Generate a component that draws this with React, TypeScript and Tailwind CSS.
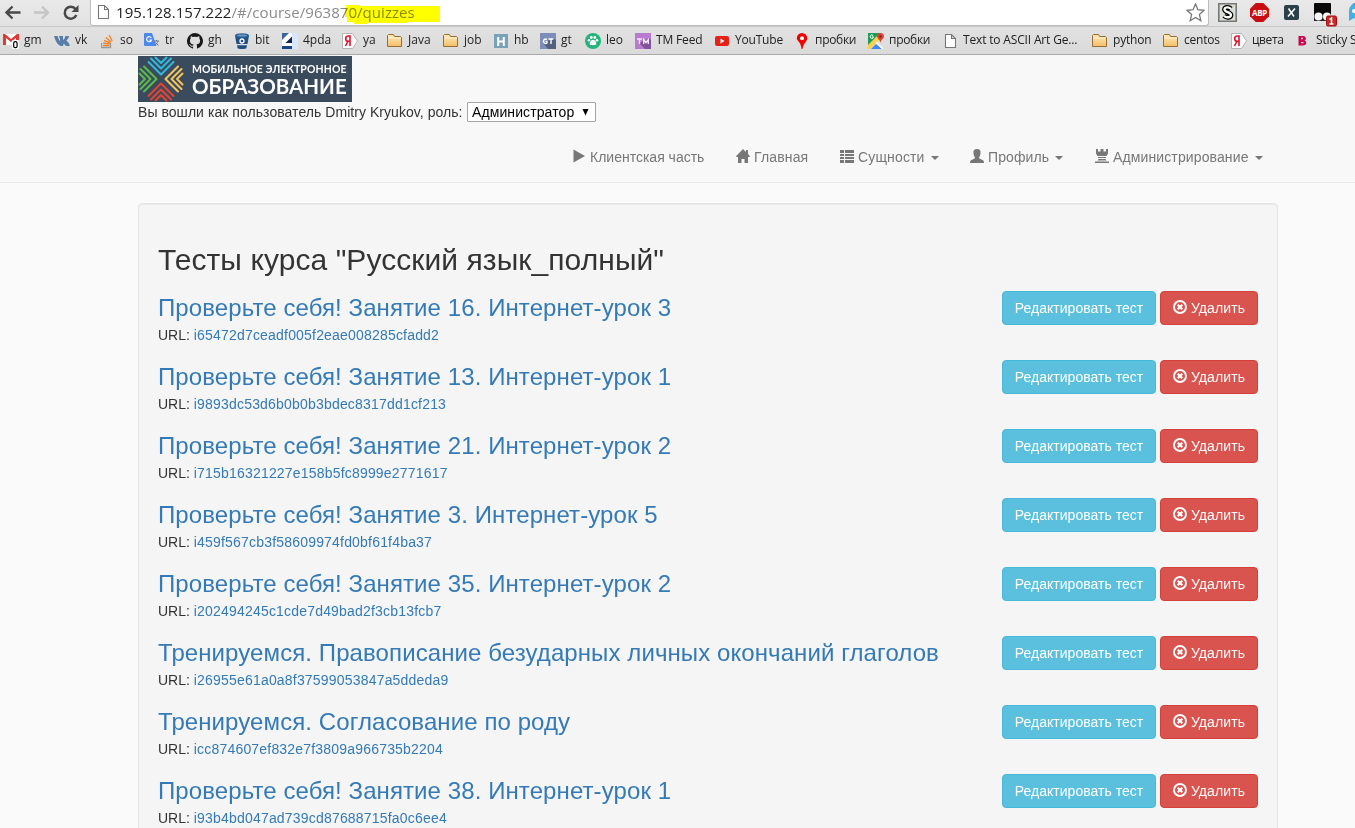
import { ReactNode } from 'react';

const quizzes = [
  ['Проверьте себя! Занятие 16. Интернет-урок 3', 'i65472d7ceadf005f2eae008285cfadd2'],
  ['Проверьте себя! Занятие 13. Интернет-урок 1', 'i9893dc53d6b0b0b3bdec8317dd1cf213'],
  ['Проверьте себя! Занятие 21. Интернет-урок 2', 'i715b16321227e158b5fc8999e2771617'],
  ['Проверьте себя! Занятие 3. Интернет-урок 5', 'i459f567cb3f58609974fd0bf61f4ba37'],
  ['Проверьте себя! Занятие 35. Интернет-урок 2', 'i202494245c1cde7d49bad2f3cb13fcb7'],
  ['Тренируемся. Правописание безударных личных окончаний глаголов', 'i26955e61a0a8f37599053847a5ddeda9'],
  ['Тренируемся. Согласование по роду', 'icc874607ef832e7f3809a966735b2204'],
  ['Проверьте себя! Занятие 38. Интернет-урок 1', 'i93b4bd047ad739cd87688715fa0c6ee4'],
];

const Icon = ({ children, className = 'size-4' }: { children: ReactNode; className?: string }) => (
  <svg viewBox="0 0 16 16" className={`shrink-0 ${className}`}>{children}</svg>
);

const Folder = () => (
  <Icon>
    <defs>
      <linearGradient id="folder" x1="0" y1="0" x2="0" y2="1">
        <stop offset="0" stopColor="#ffe9b8" /><stop offset="1" stopColor="#f3bf6b" />
      </linearGradient>
    </defs>
    <path d="M.5 13.500h14V4.500L13.500 3.500H7.500L6.500 1.500H1.500L.5 2.500z" fill="url(#folder)" stroke="#9a6b33" />
    <path d="M1.500 5h12" stroke="#fff3d6" />
  </Icon>
);

const Yandex = () => (
  <Icon>
    <path d="M.5.5h10l5 7.500-5 7.500H.5z" fill="#fff" stroke="#b5b5b5" />
    <path d="M8 13V3H6.300C4.500 3 3.700 4.100 3.700 5.700S4.600 8.300 6.200 8.300H8M5.800 8.500L3.500 13" fill="none" stroke="#e3122b" strokeWidth="1.600" />
  </Icon>
);

const Page = () => (
  <Icon>
    <path d="M3.500 1.500h6l4 4v9h-10z M9.500 1.500v4h4" fill="#fff" stroke="#777" strokeWidth="1.100" />
  </Icon>
);

const icons: Record<string, ReactNode> = {
  gmail: (
    <Icon className="size-4 overflow-visible">
      <path d="M0 1h16v11H0z" fill="#fff" />
      <path d="M0 12V1h2l6 5 6-5h2v11h-3V5L8 9 3 5v7z" fill="#dc3a35" />
      <rect x="9" y="7" width="7" height="9" rx="1" fill="#fff" />
      <rect x="10.700" y="8.700" width="3.400" height="6" rx="1.500" fill="none" stroke="#000" strokeWidth="1.200" />
    </Icon>
  ),
  vk: <Icon><path d="M0 3h3.500l2 5C6.600 7.500 6 5 5 4V3h4v4c1-.5 2-2.500 2.500-4H15c-.2 2-1.500 3.300-2.600 4.800C14 9 15.500 10.400 15.800 13H12l-2.300-2.600L9 13H7C3.300 12 1.500 8 0 3z" fill="#587ea8" /></Icon>,
  so: (
    <Icon className="ml-[2px] size-4">
      <path d="M.5 10v4.500h9V10" fill="none" stroke="#999" strokeWidth="1.300" />
      <path d="M2 12.500h6.500M2.200 10l6.500 .9M3 7.300l6.200 2.500M5 4.400l5 4.600M8.200 2l3 6" stroke="#f48024" strokeWidth="1.300" />
    </Icon>
  ),
  tr: (
    <Icon>
      <path d="M7 4h8.500v12H10z" fill="#ddd" />
      <path d="M1 0h7l4.500 13H1q-1 0-1-1V1q0-1 1-1z" fill="#4a88ee" />
      <path d="M7.300 5A2.500 2.500 0 1 0 7.500 7H5.300" fill="none" stroke="#fff" strokeWidth="1.200" />
      <path d="M10 8h5M12.500 7v1M14 8c-.3 2-2 3.500-3 4M11.500 9.500l3 3" fill="none" stroke="#777" />
    </Icon>
  ),
  gh: <Icon><path fill="#191717" d="M8 0a8 8 0 0 0-2.530 15.590c.4.070.55-.17.55-.38v-1.490c-2.230.49-2.700-.95-2.700-.95-.36-.92-.89-1.170-.89-1.170-.73-.5.050-.49.050-.49.800.060 1.230.82 1.230.82.710 1.220 1.870.87 2.330.66.070-.51.280-.87.510-1.070-1.780-.2-3.640-.89-3.640-3.950 0-.87.310-1.590.82-2.150-.08-.2-.36-1.020.08-2.120 0 0 .67-.21 2.200.82a7.600 7.600 0 0 1 4 0c1.530-1.040 2.200-.82 2.200-.82.440 1.100.160 1.920.080 2.120.510.560.820 1.270.820 2.150 0 3.070-1.870 3.750-3.650 3.950.290.250.540.730.540 1.480v2.200c0 .21.150.46.550.38A8 8 0 0 0 8 0z" /></Icon>,
  bit: (
    <Icon>
      <path d="M1 2.500L2.500 11h11L15 2.500z M3 12.300h10l-.6 3c-2 1-6.800 1-8.800 0z" fill="#205081" />
      <ellipse cx="8" cy="2.500" rx="7" ry="2.300" fill="#28609c" />
      <ellipse cx="8" cy="2.500" rx="5" ry="1" fill="#6f96bd" />
      <circle cx="8" cy="8" r="2" fill="#205081" stroke="#fff" strokeWidth="1.300" />
    </Icon>
  ),
  pda: (
    <Icon>
      <path d="M0 0h16v16H0z" fill="#d8e7fd" />
      <path d="M0 0h10v16H0z" fill="#fff" />
      <path d="M0 0h7L0 7z" fill="#3c659f" />
      <path d="M10 3.500v6.500H3.500z" fill="#10264d" />
      <path d="M0 13h10v3H0z" fill="#1b4584" />
    </Icon>
  ),
  ya: <Yandex />,
  folder: <Folder />,
  hb: <Icon><path d="M1 1h14v14H1z" fill="#78a2b7" /><path d="M5.200 4v9M10.800 4v9M5 8.500h6" stroke="#fff" strokeWidth="2" /></Icon>,
  gt: (
    <Icon>
      <path d="M0 0h16v16H0z" fill="#7b8db8" /><path d="M3 10l5 6h8V7l-3-2z" fill="#53617f" />
      <path d="M7 6.500A2.200 2.200 0 1 0 7 10V8.500H5.500M8.500 6h5M11 6v5" fill="none" stroke="#fff" strokeWidth="1.400" />
    </Icon>
  ),
  leo: (
    <Icon>
      <circle cx="8" cy="8" r="8" fill="#25b47c" />
      <g fill="#fff"><circle cx="4" cy="7.300" r="1.300" /><circle cx="6.300" cy="4.500" r="1.400" /><circle cx="9.800" cy="4.500" r="1.400" /><circle cx="12" cy="7.300" r="1.300" /><path d="M8 6.800c2.500 0 4.500 5 2.300 5.300-1.400.1-3.200.1-4.600 0C3.500 11.800 5.500 6.800 8 6.800z" /></g>
    </Icon>
  ),
  tm: (
    <Icon>
      <path d="M0 0h16v16H0z" fill="#b77ccf" /><path d="M4 10l6 6h6V7l-2-2z" fill="#84549a" />
      <path d="M2 6h5M4.500 6v5M8.700 11V6.500l2.300 3 2.300-3V11" fill="none" stroke="#f4e5fa" strokeWidth="1.400" />
    </Icon>
  ),
  yt: <Icon><rect x="1" y="3" width="14" height="10" rx="2" fill="#e62117" /><path d="M6.500 5.500v5L10.500 8z" fill="#fff" /></Icon>,
  pin: <Icon><path d="M8 0a5.200 5.200 0 0 0-5.200 5.200C2.800 8 7 8.500 7.500 16h1C9 10.500 13.200 8.500 13.200 5.200A5.200 5.200 0 0 0 8 0z" fill="#f20000" /><circle cx="8" cy="5.200" r="2" fill="#fff" /></Icon>,
  maps: (
    <Icon>
      <path d="M0 0h16v16H0z" fill="#dedede" /><path d="M0 0h13L0 13z" fill="#1e9d58" />
      <path d="M0 12L11 1l3 3L2 16H0z" fill="#fbd04b" /><path d="M3 16l5-5 6 5z" fill="#4285f4" /><path d="M8 9l7 7" stroke="#fff" strokeWidth="1.500" />
      <path d="M12.500 0a3.500 3.500 0 0 0-3.500 3.500c0 2 3 3 3.500 6.500.5-3.500 3.500-4.500 3.500-6.500A3.500 3.500 0 0 0 12.500 0z" fill="#dc4336" /><circle cx="12.500" cy="3.500" r="1.200" fill="#7b231d" />
      <path d="M5.200 2.700A1.700 1.700 0 1 0 5.500 4H4" fill="none" stroke="#fff" />
    </Icon>
  ),
  page: <Page />,
  bold: <Icon><path d="M3.500 3v9.500H8c4 0 4-4.500 1.500-5C12 6.500 11 3 8 3z" fill="#c9064f" /><path d="M6 5.500h2M6 9.700h2.500" stroke="#e4e4e4" strokeWidth="1.300" /></Icon>,
};

const bookmarks: [string, string, string][] = [
  ['gmail', 'gm', 'w-[51px]'], ['vk', 'vk', 'w-[45px]'], ['so', 'so', 'w-[45px] gap-[3px]'], ['tr', 'tr', 'w-[43px]'],
  ['gh', 'gh', 'w-[47px]'], ['bit', 'bit', 'w-[48px]'], ['pda', '4pda', 'w-[60px]'], ['ya', 'ya', 'w-[45px]'],
  ['folder', 'Java', 'w-[56px]'], ['folder', 'job', 'w-[50px]'], ['hb', 'hb', 'w-[47px]'], ['gt', 'gt', 'w-[45px]'],
  ['leo', 'leo', 'w-[50px]'], ['tm', 'TM Feed', 'w-[79px] tracking-[-0.15px]'], ['yt', 'YouTube', 'w-[80px] tracking-[-0.2px]'], ['pin', 'пробки', 'w-[74px] tracking-[-0.3px]'],
  ['maps', 'пробки', 'w-[74px] tracking-[-0.3px]'], ['page', 'Text to ASCII Art Ge...', 'w-[150px] tracking-[-0.16px]'], ['folder', 'python', 'w-[71px] tracking-[-0.2px]'],
  ['folder', 'centos', 'w-[68px] tracking-[-0.2px]'], ['ya', 'цвета', 'w-[64px] tracking-[-0.4px]'], ['bold', 'Sticky S', 'w-[70px] tracking-[-0.15px]'],
];

const Browser = () => (
  <div className="h-[55px] overflow-hidden border-b border-[#aaa] bg-linear-to-b from-[#e9e9e9] to-[#dadada] font-['Open_Sans',sans-serif]">
    <div className="flex h-[26px] items-start">
      <div className="flex w-[90px] shrink-0 gap-[13px] pt-[5px] pl-[5px]">
        <Icon><path d="M15.500 7.500H2M7.500 1.500l-6 6 6 6" fill="none" stroke="#494949" strokeWidth="2.300" /></Icon>
        <Icon><path d="M0 7.500h13.500M8 1.500l6 6-6 6" fill="none" stroke="#c5c5c5" strokeWidth="2.300" /></Icon>
        <Icon><path d="M13.300 10A6 6 0 1 1 12.500 4" fill="none" stroke="#494949" strokeWidth="2.500" /><path d="M15.500 0v7h-7z" fill="#494949" /></Icon>
      </div>
      <div className="relative flex h-[26px] w-[1119px] shrink-0 items-start rounded-b-[3px] border border-t-0 border-[#bdbdbd] bg-white pt-[4px] pl-[4px]">
        <Page />
        <div className="-mt-[4px] ml-[5px] w-[310px] text-[15px] leading-[24px] tracking-[0.05px] whitespace-nowrap text-[#8b8b8b]"><span className="text-[#222]">195.128.157.222</span>/#/course/963870/quizzes</div>
        <svg className="absolute top-[5px] left-[254px] h-[20px] w-[96px] mix-blend-multiply" viewBox="0 0 96 20"><path d="M1 0h14v1h80v16H62v1H22v1H9v-2H2v-5H0V3h1z" fill="#ffff00" /></svg>
        <svg className="absolute top-[3px] right-[3px] size-[19px]" viewBox="0 0 19 19"><path d="M9.500 1l2.400 5.700 6.100.6-4.600 4.200 1.400 6.200-5.300-3.200-5.300 3.200 1.400-6.200L1 7.300l6.100-.6z" fill="#fff" stroke="#777" strokeWidth="1.300" /></svg>
      </div>
      <div className="flex w-[160px] shrink-0 items-start pt-[3px] pl-[9px]">
        <svg className="mr-[13px] size-[19px] shrink-0" viewBox="0 0 19 19"><path d="M.8.800h17.400v17.400H.8z" fill="#d9dfd4" stroke="#777" strokeWidth="1.600" /><path d="M13 5.800C10.500 3.500 6.500 4.300 6.500 6.500c0 3 6.500 2.300 6.500 5.500 0 2.700-4.500 3-7 .8" fill="none" stroke="#000" strokeWidth="4.800" /><path d="M13 5.800C10.500 3.500 6.500 4.300 6.500 6.500c0 3 6.500 2.300 6.500 5.500 0 2.700-4.500 3-7 .8" fill="none" stroke="#fff" strokeWidth="2.300" /></svg>
        <div className="mr-[15px] flex size-[19px] items-center justify-center bg-[#c90e12] text-[8px] font-bold tracking-[-0.3px] text-white [clip-path:polygon(30%_0,70%_0,100%_30%,100%_70%,70%_100%,30%_100%,0_70%,0_30%)]">ABP</div>
        <svg className="mt-[2px] mr-[15px] size-[15px] shrink-0" viewBox="0 0 15 15"><rect width="15" height="15" rx="2" fill="#2b4048" /><path d="M4.500 3.500l5.500 8M11 3.500l-7 8" stroke="#fff" strokeWidth="1.500" /></svg>
        <svg className="mr-[10px] -ml-px h-[24px] w-[25px] shrink-0" viewBox="0 0 25 24"><path d="M1 1q0-1 1-1h15q1 0 1 1v10H1z" fill="#090909" /><path d="M1 11h17v7H1z" fill="#222" /><circle cx="5.500" cy="13.500" r="4" fill="#f5f5f5" /><circle cx="14" cy="13.500" r="4" fill="#f5f5f5" /><rect x="13.500" y="13" width="10" height="10" rx="1.500" fill="#c82a2a" stroke="#a40c0c" /><path d="M16.500 16.500l2-1.500V21M16.500 21h4" fill="none" stroke="#fff" strokeWidth="1.500" /></svg>
        <svg className="size-[20px] shrink-0" viewBox="0 0 20 20"><path d="M1 17V8a9 9 0 0 1 18 0v10l-5-3-4 3-4-3-5 3z" fill="#45aee2" /><circle cx="6" cy="8" r="2" fill="#fff" /></svg>
      </div>
    </div>
    <div className="flex h-[28px] w-[1400px] items-center border-t border-[#c8c8c8] pl-[3px]">
      {bookmarks.map(([icon, label, width], i) => (
        <div key={i} className={`flex shrink-0 items-center text-[12px] leading-[16px] whitespace-nowrap text-[#222] ${icon === 'so' ? '' : 'gap-[5px]'} ${width}`}>{icons[icon]}<span className="-mt-px">{label}</span></div>
      ))}
    </div>
  </div>
);

const chevrons = [0, 90, 180, 270];
const chevronColors = ['#31b8df', '#f6c45a', '#e84331', '#5dbb4c'];
const Logo = () => (
  <div className="flex h-[46px] w-[214px] bg-[#3a4b5e] text-white">
    <svg className="h-[46px] w-[46px] shrink-0" viewBox="0 0 46 46">
      {chevrons.map((angle, i) => (
        <g key={angle} transform={`rotate(${angle} 23 23)`} fill="none" stroke={chevronColors[i]} strokeWidth="2" strokeLinecap="round" strokeLinejoin="round">
          <path d="M17.500 1.500L23 7l5.500-5.500M13 2.500l10 10 10-10M10.500 6L23 18.500 35.500 6" />
        </g>
      ))}
    </svg>
    <div className="ml-[8px] flex flex-col pt-[7px] font-['Lato',sans-serif] font-bold whitespace-nowrap">
      <span className="text-[10.5px] leading-[13px] tracking-[0.1px]">МОБИЛЬНОЕ ЭЛЕКТРОННОЕ</span>
      <span className="text-[20.5px] leading-[20px]">ОБРАЗОВАНИЕ</span>
    </div>
  </div>
);

const Glyph = ({ d }: { d: string }) => <svg viewBox="0 0 14 14" className="-mt-[2px] mr-[4px] size-[14px] shrink-0" fill="currentColor"><path d={d} /></svg>;
const nav: [string, string, boolean, string][] = [
  ['Клиентская часть', 'M1.500 .500l11.500 6.500L1.500 13.500z', false, 'w-[164px]'],
  ['Главная', 'M7 0l3 3V1h2v4l2 2.300-.5.700H12v6H8.500v-4h-3v4H2V8H.5L0 7.300z', false, 'w-[104px] tracking-[0.15px]'],
  ['Сущности', 'M0 1h4v3H0zM5 1h9v3H5zM0 5h4v2H0zM5 5h9v2H5zM0 8h4v2H0zM5 8h9v2H5zM0 11h4v3H0zM5 11h9v3H5z', true, 'w-[130px] tracking-[0.15px]'],
  ['Профиль', 'M7 0c2.800 0 4 1.500 3.500 4.500-.2 2-.9 3-1.500 4 0 1 1.500 1.500 3 2.200 1.500.6 2 1.300 2 3.300H0c0-2 .5-2.700 2-3.300 1.500-.7 3-1.200 3-2.200-.6-1-1.300-2-1.500-4C3 1.500 4.200 0 7 0z', true, 'w-[125px] tracking-[0.1px]'],
  ['Администрирование', 'M1 0h2v2.500h2.500V0h3v2.500H11V0h2v4.500L11.500 7h-9L1 4.500zM3 8h8v1H3zM3.500 10h7l1 1.500h-9zM0 12.500h14V14H0z', true, 'w-[170px] tracking-[0.12px]'],
];

export default function App() {
  return (
    <div className="h-[828px] w-[1355px] overflow-hidden bg-[#fafafa] font-['Liberation_Sans',sans-serif] text-[14px] leading-[20px] text-[#333]">
      <Browser />
      <header className="h-[128px] border-b border-[#e7e7e7] bg-[#f8f8f8] pt-[1px] pl-[138px]">
        <Logo />
        <div className="flex h-[20px] items-center whitespace-nowrap">
          <span className="w-[329px] tracking-[0.05px]">Вы вошли как пользователь Dmitry Kryukov, роль:</span>
          <button className="flex h-[20px] w-[129px] items-center rounded-[1px] border border-[#a5a5a5] bg-white pl-[4px] text-black">
            <span className="w-[110px] text-left tracking-[0.1px]">Администратор</span>
            <svg viewBox="0 0 7 7" className="size-[7px]"><path d="M.5 0h6L3.500 6.500z" /></svg>
          </button>
        </div>
        <nav className="flex h-[70px] items-center pl-[434px] whitespace-nowrap text-[#777]">
          {nav.map(([label, d, caret, width]) => (
            <a key={label} className={`flex shrink-0 items-center ${width}`}>
              <Glyph d={d} /><span>{label}</span>
              {caret && <svg viewBox="0 0 8 4" className="mt-[2px] ml-[6px] h-[4px] w-[8px]" fill="currentColor"><path d="M0 0h8L4 4z" /></svg>}
            </a>
          ))}
        </nav>
      </header>
      <main className="mt-[20px] ml-[138px] h-[700px] w-[1140px] rounded-[4px] border border-[#e3e3e3] bg-[#f5f5f5] px-[19px] pt-[39px] shadow-[inset_0_1px_1px_rgba(0,0,0,0.05)]">
        <h2 className="h-[48px] text-[30px] leading-[33px] tracking-[0.07px] whitespace-nowrap">Тесты курса "Русский язык_полный"</h2>
        {quizzes.map(([title, id]) => (
          <div key={id} className="flex h-[69px] items-start justify-between whitespace-nowrap">
            <div className="pt-[4px]">
              <h3 className="h-[30px] text-[24px] leading-[26px] tracking-[0.09px] text-[#337ab7]">{title}</h3>
              <div>URL: <a className="tracking-[0.19px] text-[#337ab7]">{id}</a></div>
            </div>
            <div className="flex gap-[4px] text-white">
              <button className="h-[34px] w-[154px] rounded-[4px] border border-[#46b8da] bg-[#5bc0de] tracking-[0.03px]">Редактировать тест</button>
              <button className="flex h-[34px] w-[98px] items-center justify-center rounded-[4px] border border-[#d43f3a] bg-[#d9534f]">
                <svg viewBox="0 0 14 14" className="-mt-[2px] mr-[4px] size-[14px]" fill="none" stroke="currentColor"><circle cx="7" cy="7" r="6" strokeWidth="1.900" /><path d="M4.700 4.700l4.600 4.600M9.300 4.700L4.700 9.300" strokeWidth="2.100" /></svg>
                <span className="tracking-[0.1px]">Удалить</span>
              </button>
            </div>
          </div>
        ))}
      </main>
    </div>
  );
}
